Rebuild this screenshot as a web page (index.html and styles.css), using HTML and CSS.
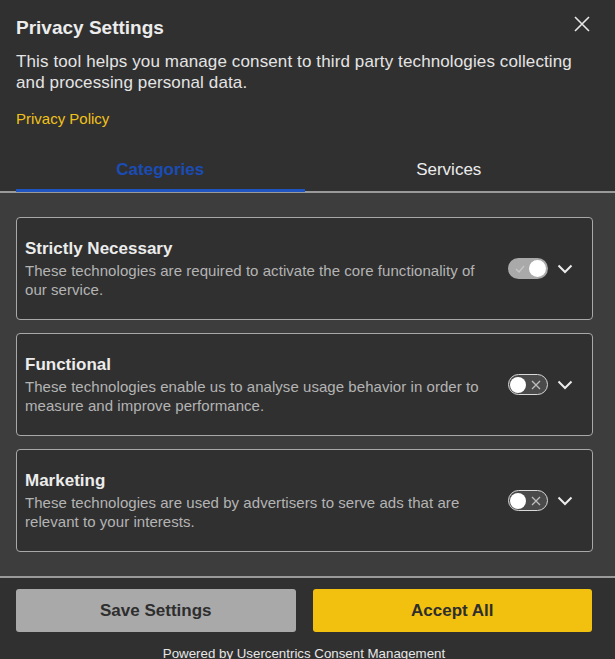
FILE: index.html
```html
<!DOCTYPE html>
<html>
<head>
<meta charset="utf-8">
<link rel="stylesheet" href="styles.css">
</head>
<body>
<div class="modal">
  <header class="head">
    <div class="title-row">
      <h1 class="title">Privacy Settings</h1>
      <button class="close" aria-label="Close">
        <svg width="16" height="16" viewBox="0 0 16 16"><path d="M1 1L15 15M15 1L1 15" stroke="#e6e6e6" stroke-width="1.6" fill="none"/></svg>
      </button>
    </div>
    <p class="desc">This tool helps you manage consent to third party technologies collecting and processing personal data.</p>
    <a class="policy" href="#">Privacy Policy</a>
    <nav class="tabs">
      <div class="tab-row">
        <div class="tab active">Categories</div>
        <div class="tab">Services</div>
      </div>
    </nav>
  </header>
  <main class="content">
    <section class="card">
      <div class="card-text">
        <h2 class="card-title">Strictly Necessary</h2>
        <p class="card-desc">These technologies are required to activate the core functionality of our service.</p>
      </div>
      <div class="controls">
        <span class="toggle on">
          <svg class="mark" width="10" height="8" viewBox="0 0 10 8"><path d="M1 4L4 7L9 1" stroke="#c8c8c8" stroke-width="1.2" fill="none"/></svg>
          <span class="knob"></span>
        </span>
        <svg class="chev" width="16" height="10" viewBox="0 0 16 10"><path d="M1.5 1.5L8 8L14.5 1.5" stroke="#ececec" stroke-width="2" fill="none"/></svg>
      </div>
    </section>
    <section class="card">
      <div class="card-text">
        <h2 class="card-title">Functional</h2>
        <p class="card-desc">These technologies enable us to analyse usage behavior in order to measure and improve performance.</p>
      </div>
      <div class="controls">
        <span class="toggle off">
          <span class="knob"></span>
          <svg class="mark" width="10" height="10" viewBox="0 0 10 10"><path d="M1 1L9 9M9 1L1 9" stroke="#bdbdbd" stroke-width="1.3" fill="none"/></svg>
        </span>
        <svg class="chev" width="16" height="10" viewBox="0 0 16 10"><path d="M1.5 1.5L8 8L14.5 1.5" stroke="#ececec" stroke-width="2" fill="none"/></svg>
      </div>
    </section>
    <section class="card">
      <div class="card-text">
        <h2 class="card-title">Marketing</h2>
        <p class="card-desc">These technologies are used by advertisers to serve ads that are relevant to your interests.</p>
      </div>
      <div class="controls">
        <span class="toggle off">
          <span class="knob"></span>
          <svg class="mark" width="10" height="10" viewBox="0 0 10 10"><path d="M1 1L9 9M9 1L1 9" stroke="#bdbdbd" stroke-width="1.3" fill="none"/></svg>
        </span>
        <svg class="chev" width="16" height="10" viewBox="0 0 16 10"><path d="M1.5 1.5L8 8L14.5 1.5" stroke="#ececec" stroke-width="2" fill="none"/></svg>
      </div>
    </section>
  </main>
  <footer class="foot">
    <div class="buttons">
      <button class="btn save">Save Settings</button>
      <button class="btn accept">Accept All</button>
    </div>
    <p class="powered">Powered by Usercentrics Consent Management</p>
  </footer>
</div>
</body>
</html>
```

FILE: styles.css
```css
* { box-sizing: border-box; }
html, body { margin: 0; padding: 0; }
body {
  background: #303030;
  font-family: "Liberation Sans", Arial, sans-serif;
  color: #e8e8e8;
  width: 615px;
  height: 659px;
  overflow: hidden;
}
.modal { display: flex; flex-direction: column; }
.head { padding: 16px 0 0 0; background: #303030; }
.title-row {
  display: flex;
  justify-content: space-between;
  align-items: flex-start;
  padding: 0 25px 0 16px;
}
.title {
  margin: 0;
  font-size: 19px;
  line-height: 24px;
  font-weight: 700;
  color: #ececec;
}
.close {
  background: none;
  border: 0;
  padding: 0;
  margin-top: 0;
  width: 16px;
  height: 16px;
  display: flex;
}
.desc {
  margin: 11px 16px 0 16px;
  font-size: 17px;
  letter-spacing: 0.12px;
  line-height: 21px;
  color: #e4e4e4;
  padding-right: 20px;
}
.policy {
  display: block;
  margin: 17px 16px 0 16px;
  color: #f0c21a;
  text-decoration: none;
  font-size: 15px;
  line-height: 18px;
}
.tabs {
  margin-top: 32px;
  border-bottom: 2px solid #9a9a9a;
}
.tab-row {
  display: flex;
  margin: 0 22px 0 16px;
}
.tab {
  flex: 1;
  text-align: center;
  font-size: 17px;
  line-height: 20px;
  padding-bottom: 9px;
  color: #ececec;
}
.tab.active {
  color: #1a4cb4;
  font-weight: 700;
  border-bottom: 3px solid #1f55c0;
  margin-bottom: -1px;
}
.content {
  background: #3d3d3d;
  padding: 24px 22px 24px 16px;
  display: flex;
  flex-direction: column;
  gap: 13px;
  border-bottom: 2px solid #9a9a9a;
}
.card {
  background: #303030;
  border: 1px solid #a8a8a8;
  border-radius: 4px;
  height: 103px;
  padding: 0 19px 0 8px;
  display: flex;
  align-items: center;
  gap: 16px;
}
.card-text { flex: 1; }
.card-title {
  margin: 0;
  font-size: 17px;
  line-height: 21px;
  font-weight: 700;
  color: #ececec;
}
.card-desc {
  margin: 2px 0 0 0;
  font-size: 15px;
  letter-spacing: 0.05px;
  line-height: 19px;
  color: #b4b4b4;
}
.controls {
  display: flex;
  align-items: center;
  gap: 9px;
}
.toggle {
  width: 40px;
  height: 21px;
  border-radius: 11px;
  display: flex;
  align-items: center;
  justify-content: space-between;
  padding: 0 2px;
}
.toggle.on { background: #a9a9a9; padding-left: 7px; }
.toggle.off { background: #4a4a4a; border: 1.5px solid #d8d8d8; padding: 0 6px 0 1px; }
.knob {
  width: 17px;
  height: 17px;
  border-radius: 50%;
  background: #ffffff;
}
.toggle.off .knob { width: 16px; height: 16px; }
.foot { background: #303030; padding: 11px 23px 0 16px; }
.buttons { display: flex; gap: 17px; }
.btn {
  flex: 1;
  height: 43px;
  border: 0;
  border-radius: 3px;
  font-family: "Liberation Sans", Arial, sans-serif;
  font-size: 17px;
  font-weight: 700;
  color: #2e2e2e;
}
.save { background: #a9a9a9; }
.accept { background: #f2c10f; }
.powered {
  margin: 14px 0 0 0;
  text-align: center;
  font-size: 13.3px;
  line-height: 16px;
  color: #e6e6e6;
}
```
